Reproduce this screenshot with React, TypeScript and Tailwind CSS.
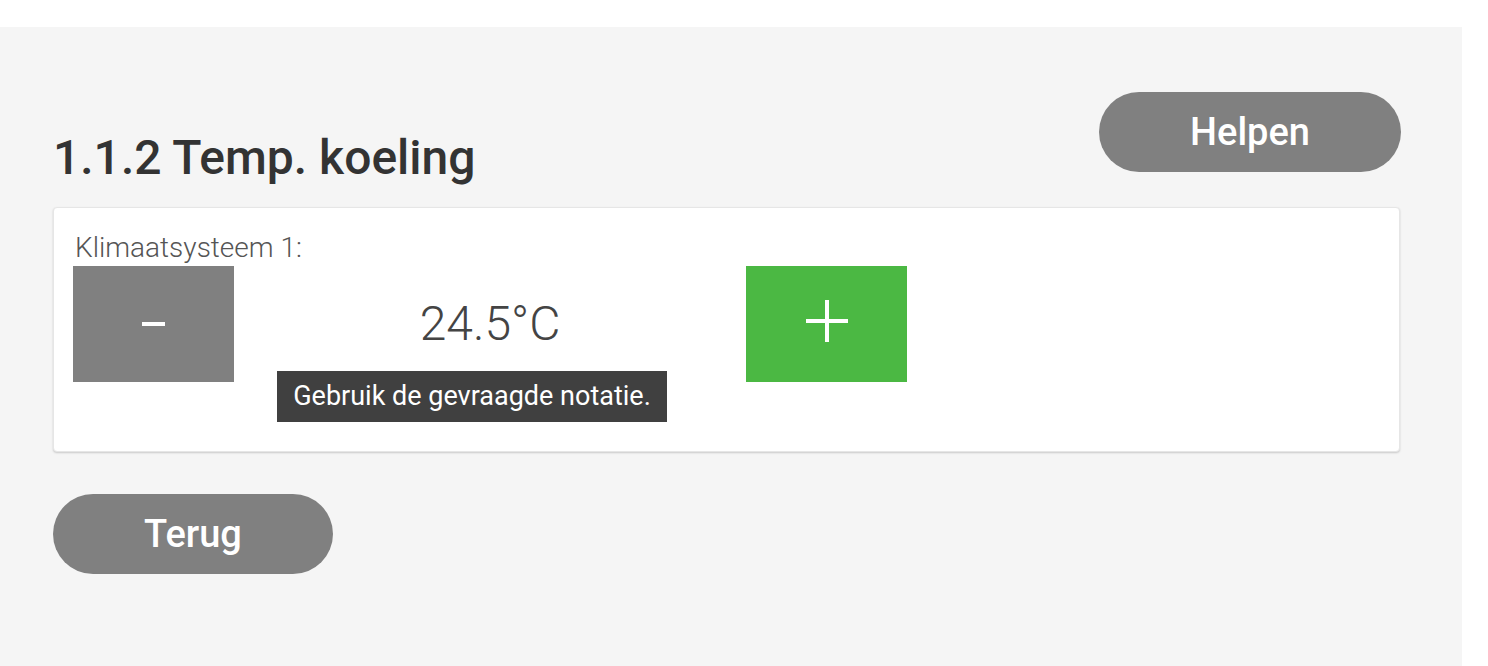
import React from "react";

const font = { fontFamily: "Roboto, 'Liberation Sans', sans-serif" };

function PillButton({ label, className }: { label: string; className?: string }) {
  return (
    <button
      type="button"
      className={`flex h-[80px] items-center justify-center rounded-full bg-[#808080] text-[38px] font-medium text-white ${className ?? ""}`}
    >
      {label}
    </button>
  );
}

export default function App() {
  return (
    <div className="h-[666px] w-[1488px] overflow-hidden bg-white pt-[27px]" style={font}>
      <div className="h-[639px] w-[1462px] bg-[#f5f5f5] pl-[53px] pr-[62px] pt-[65px]">
        <div className="flex items-start justify-between">
          <h1 className="mt-[36px] text-[48px] font-medium leading-[60px] text-[#333]">1.1.2 Temp. koeling</h1>
          <PillButton label="Helpen" className="mr-[-1px] w-[302px]" />
        </div>

        <section className="mt-[19px] rounded-[4px] border border-[#e6e6e6] bg-white pb-[69px] pl-[19px] pt-[25px] shadow-[0_1px_2px_rgba(0,0,0,0.18)]">
          <label className="block pl-[2px] text-[28px] font-light leading-[30px] text-[#555]">Klimaatsysteem 1:</label>
          <div className="mt-[3px] flex items-stretch">
            <button type="button" className="flex h-[116px] w-[161px] items-center justify-center bg-[#808080]">
              <span className="block h-[4px] w-[23px] bg-white" />
            </button>
            <div className="relative flex w-[512px] items-center justify-center">
              <span className="text-[48px] font-light leading-none text-[#444]">24.5°C</span>
              <div className="absolute left-[43px] top-[105px] flex h-[51px] w-[390px] items-center justify-center bg-[#404040] text-[27px] text-white">
                Gebruik de gevraagde notatie.
              </div>
            </div>
            <button type="button" className="flex h-[116px] w-[161px] items-center justify-center bg-[#4bb843]">
              <svg width="42" height="42" viewBox="0 0 42 42" className="-mt-[6px]">
                <path d="M21 0v42M0 21h42" stroke="white" strokeWidth="4" />
              </svg>
            </button>
          </div>
        </section>

        <PillButton label="Terug" className="mt-[42px] h-[78px] w-[280px]" />
      </div>
    </div>
  );
}
